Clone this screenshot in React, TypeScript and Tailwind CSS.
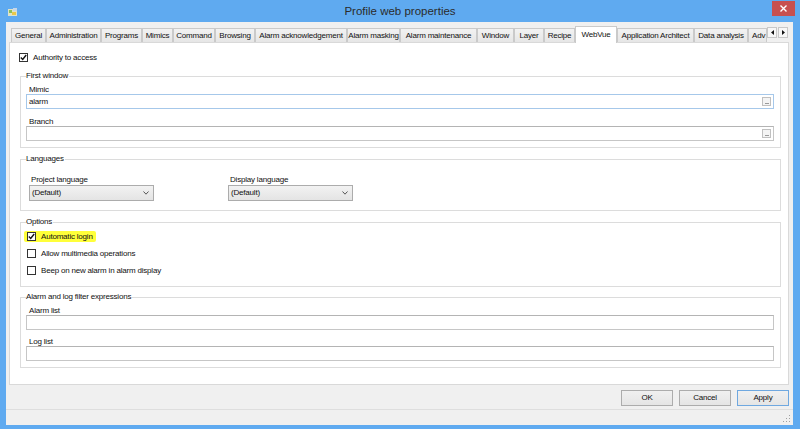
import React from "react";

const tabs = [
  { label: "General", w: "w-[35px]" },
  { label: "Administration", w: "w-[55px]" },
  { label: "Programs", w: "w-[41px]" },
  { label: "Mimics", w: "w-[31px]" },
  { label: "Command", w: "w-[42px]" },
  { label: "Browsing", w: "w-[40px]" },
  { label: "Alarm acknowledgement", w: "w-[92px]" },
  { label: "Alarm masking", w: "w-[53px]" },
  { label: "Alarm maintenance", w: "w-[77px]" },
  { label: "Window", w: "w-[37px]" },
  { label: "Layer", w: "w-[30px]" },
  { label: "Recipe", w: "w-[31px]" },
  { label: "WebVue", w: "w-[42px]", active: true },
  { label: "Application Architect", w: "w-[77px]" },
  { label: "Data analysis", w: "w-[54px]" },
];

function Check({ checked }: { checked?: boolean }) {
  return (
    <span className="w-[9px] h-[9px] border border-[#333] bg-white flex items-center justify-center shrink-0">
      {checked && (
        <svg width="7" height="7" viewBox="0 0 7 7">
          <path d="M0.8 3.6 L2.7 5.4 L6.2 1" fill="none" stroke="#111" strokeWidth="1.4" />
        </svg>
      )}
    </span>
  );
}

function Group({ title, className, children }: { title: string; className: string; children?: React.ReactNode }) {
  return (
    <div className={`relative ml-[10px] mr-[7px] border border-[#dcdcdc] ${className}`}>
      <span className="absolute left-[5px] -top-[6px] bg-white pr-[1px] leading-[10px]">{title}</span>
      {children}
    </div>
  );
}

function Label({ text, className = "" }: { text: string; className?: string }) {
  return <div className={`ml-[8px] h-[9px] leading-[9px] ${className}`}>{text}</div>;
}

function Field({ value, browse, focused }: { value?: string; browse?: boolean; focused?: boolean }) {
  return (
    <div
      className={`h-[15px] ml-[5px] mr-[6px] border bg-white flex items-center justify-between pl-[2px] pr-[2px] ${
        focused ? "border-[#a6c8ea]" : "border-[#c6c6c6] border-t-[#b4b4b4]"
      }`}
    >
      <span className="leading-[10px]">{value}</span>
      {browse && (
        <span className="w-[9px] h-[9px] border border-[#c0c0c0] bg-[#f4f4f4] flex items-end justify-center pb-[1px]">
          <span className="w-[4px] h-px bg-[#9a9a9a]" />
        </span>
      )}
    </div>
  );
}

function Select() {
  return (
    <div className="w-[125px] h-[16px] border border-[#acacac] bg-linear-to-b from-[#f2f2f2] to-[#e4e4e4] flex items-center justify-between pl-[2px] pr-[4px]">
      <span className="leading-[10px]">(Default)</span>
      <svg width="6" height="4" viewBox="0 0 6 4">
        <path d="M0.5 0.5 L3 3.2 L5.5 0.5" stroke="#555" fill="none" strokeWidth="1" />
      </svg>
    </div>
  );
}

function Button({ text, primary }: { text: string; primary?: boolean }) {
  return (
    <div
      className={`w-[52px] h-[16px] flex items-center justify-center border bg-linear-to-b from-[#f0f0f0] to-[#e5e5e5] ${
        primary ? "border-[#6fa8e0]" : "border-[#acacac]"
      }`}
    >
      {text}
    </div>
  );
}

export default function App() {
  return (
    <div className="w-[800px] h-[429px] bg-[#5faaf0] flex flex-col overflow-hidden font-['Liberation_Sans',Arial,sans-serif] text-[8px] tracking-[-0.2px] text-[#111]">
      {/* title bar */}
      <div className="h-[22px] relative flex items-center justify-center shrink-0">
        <svg className="absolute left-[8px] top-[8px]" width="10" height="8" viewBox="0 0 10 8">
          <rect x="0" y="1" width="9" height="7" fill="#dfe3c8" />
          <rect x="1" y="2" width="3" height="3" fill="#8cbf5a" />
          <rect x="4" y="4" width="4" height="3" fill="#e9c84a" />
          <rect x="5" y="0" width="4" height="3" fill="#c6d7e8" />
        </svg>
        <span className="text-[11.5px] tracking-normal text-[#2b2b2b] pt-[1px]">Profile web properties</span>
        <div className="absolute right-[5px] top-[1px] w-[23px] h-[15px] bg-[#c75050] flex items-center justify-center">
          <svg width="7" height="7" viewBox="0 0 7 7">
            <path d="M0.5 0.5 L6.5 6.5 M6.5 0.5 L0.5 6.5" stroke="#fff" strokeWidth="1.4" />
          </svg>
        </div>
      </div>

      {/* body */}
      <div className="ml-[6px] mr-[7px] h-[403px] bg-[#f0f0f0] flex flex-col shrink-0">
        {/* tabs */}
        <div className="mt-[4px] h-[16px] pl-[5px] flex items-end">
          {tabs.map((t) =>
            t.active ? (
              <div
                key={t.label}
                className={`${t.w} h-[17px] -mb-px relative z-10 bg-white border border-[#cacaca] border-b-0 flex justify-center pt-[3px] leading-[10px]`}
              >
                {t.label}
              </div>
            ) : (
              <div
                key={t.label}
                className={`${t.w} h-[14px] border border-[#cacaca] border-b-0 bg-linear-to-b from-[#f2f2f2] to-[#e6e6e6] flex items-center justify-center whitespace-nowrap`}
              >
                {t.label}
              </div>
            )
          )}
          <div className="w-[19px] h-[14px] border border-[#cacaca] border-b-0 bg-linear-to-b from-[#f2f2f2] to-[#e6e6e6] flex items-center pl-[3px] overflow-hidden whitespace-nowrap">
            Adv
          </div>
          <div className="self-start mt-[1px] flex gap-px">
            <div className="w-[10px] h-[11px] border border-[#c8c8c8] bg-[#f7f7f7] flex items-center justify-center">
              <svg width="3" height="5" viewBox="0 0 3 5">
                <path d="M3 0 L0 2.5 L3 5 Z" fill="#111" />
              </svg>
            </div>
            <div className="w-[10px] h-[11px] border border-[#c8c8c8] bg-[#f7f7f7] flex items-center justify-center">
              <svg width="3" height="5" viewBox="0 0 3 5">
                <path d="M0 0 L3 2.5 L0 5 Z" fill="#111" />
              </svg>
            </div>
          </div>
        </div>

        {/* panel */}
        <div className="ml-[3px] mr-[4px] h-[343px] bg-white border border-[#d9d9d9] flex flex-col">
          <div className="mt-[10px] ml-[9px] flex items-center gap-[5px] h-[9px]">
            <Check checked />
            <span>Authority to access</span>
          </div>

          <Group title="First window" className="mt-[14px] h-[72px] pt-[8px]">
            <Label text="Mimic" />
            <Field value="alarm" browse focused />
            <Label text="Branch" className="mt-[8px]" />
            <Field browse />
          </Group>

          <Group title="Languages" className="mt-[11px] h-[52px] pt-[15px]">
            <div className="flex">
              <div className="ml-[8px] w-[125px]">
                <div className="ml-[2px] h-[9px] leading-[9px] mb-px">Project language</div>
                <Select />
              </div>
              <div className="ml-[74px] w-[125px]">
                <div className="ml-[2px] h-[9px] leading-[9px] mb-px">Display language</div>
                <Select />
              </div>
            </div>
          </Group>

          <Group title="Options" className="mt-[11px] h-[65px] pt-[9px]">
            <div className="ml-[6px] flex flex-col gap-[8px]">
              <div className="h-[9px] flex items-center">
                <span className="-ml-[3px] pl-[3px] pr-[3px] h-[11px] bg-[#ffff3a] rounded-[2px] flex items-center gap-[5px]">
                  <Check checked />
                  <span>Automatic login</span>
                </span>
              </div>
              <div className="h-[9px] flex items-center gap-[5px]">
                <Check />
                <span>Allow multimedia operations</span>
              </div>
              <div className="h-[9px] flex items-center gap-[5px]">
                <Check />
                <span>Beep on new alarm in alarm display</span>
              </div>
            </div>
          </Group>

          <Group title="Alarm and log filter expressions" className="mt-[10px] h-[71px] pt-[8px]">
            <Label text="Alarm list" />
            <Field />
            <Label text="Log list" className="mt-[7px]" />
            <Field />
          </Group>
        </div>

        {/* buttons */}
        <div className="mt-[5px] h-[16px] flex justify-end gap-[6px] mr-[4px]">
          <Button text="OK" />
          <Button text="Cancel" />
          <Button text="Apply" primary />
        </div>

        {/* status strip */}
        <div className="mt-[3px] h-px bg-[#dedede]" />
        <div className="h-[15px] flex justify-end items-end pr-[2px] pb-[2px]">
          <svg width="8" height="8" viewBox="0 0 8 8">
            <rect x="6" y="0" width="1" height="1" fill="#a0a0a0" />
            <rect x="3" y="3" width="1" height="1" fill="#a0a0a0" />
            <rect x="6" y="3" width="1" height="1" fill="#a0a0a0" />
            <rect x="0" y="6" width="1" height="1" fill="#a0a0a0" />
            <rect x="3" y="6" width="1" height="1" fill="#a0a0a0" />
            <rect x="6" y="6" width="1" height="1" fill="#a0a0a0" />
          </svg>
        </div>
      </div>
    </div>
  );
}
